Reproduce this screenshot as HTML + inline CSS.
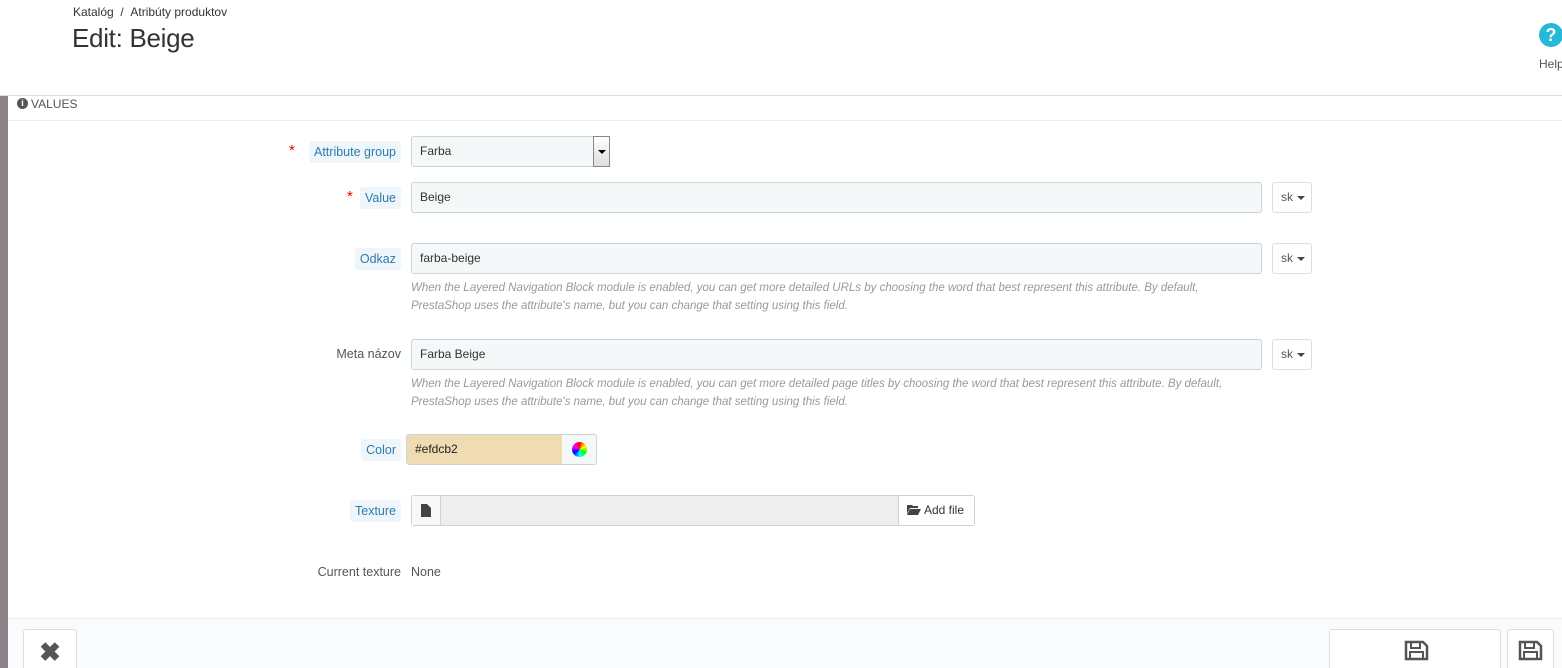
<!DOCTYPE html>
<html><head><meta charset="utf-8"><style>
*{box-sizing:border-box;margin:0;padding:0}
html,body{width:1562px;height:668px;overflow:hidden}
body{background:#fff;font-family:"Liberation Sans",sans-serif;font-size:12px;color:#555;position:relative}
.a{position:absolute}
.lbl{position:absolute;right:1161px;font-size:12.5px;color:#2f7bab;background:#eef6fb;padding:3px 5px;border-radius:3px;height:22px;line-height:16px}
.star{color:#e00;font-size:15px;position:absolute}
.inp{position:absolute;left:411px;width:851px;height:31px;background:#f4f8f9;border:1px solid #c7d6db;border-radius:3px;padding:0 8px;line-height:29px;color:#333}
.sk{position:absolute;left:1272px;width:40px;height:31px;border:1px solid #ddd;border-radius:3px;line-height:29px;padding-left:8px;color:#555;background:#fff}
.sk:after{content:"";position:absolute;left:24px;top:13px;border:4px solid transparent;border-top:4px solid #444}
.help{position:absolute;left:411px;width:850px;font-style:italic;color:#999;font-size:11.5px;line-height:18px}
</style></head><body>
<div class="a" style="left:73px;top:5px;font-size:12px;color:#333">Katalóg &nbsp;/ &nbsp;Atribúty produktov</div>
<div class="a" style="left:72px;top:23px;font-size:26px;color:#333;letter-spacing:-0.3px">Edit: Beige</div>
<div class="a" style="left:1539px;top:23px;width:24px;height:24px;border-radius:50%;background:#25b9d7;color:#fff;font-weight:bold;font-size:18px;text-align:center;line-height:24px">?</div>
<div class="a" style="left:1539px;top:57px;font-size:12px;color:#555">Help</div>
<div class="a" style="left:0;top:95px;width:1562px;height:1px;background:#ddd"></div>
<div class="a" style="left:0;top:96px;width:8px;height:572px;background:#8a8287"></div>
<div class="a" style="left:17px;top:98px;width:11px;height:11px;border-radius:50%;background:#555;color:#fff;font-size:9px;font-weight:bold;text-align:center;line-height:11px">i</div>
<div class="a" style="left:31px;top:97px;font-size:12px;color:#555">VALUES</div>
<div class="a" style="left:8px;top:120px;width:1554px;height:1px;background:#eee"></div>

<span class="star" style="left:289px;top:142px">*</span>
<div class="lbl" style="top:141px">Attribute group</div>
<div class="inp" style="top:136px;width:199px;border-radius:3px 0 0 3px">Farba</div>
<div class="a" style="left:593px;top:136px;width:17px;height:31px;border:1px solid #888;background:linear-gradient(#fff,#ddd)"><div style="position:absolute;left:4px;top:13px;border:4px solid transparent;border-top:4px solid #000"></div></div>

<span class="star" style="left:347px;top:188px">*</span>
<div class="lbl" style="top:187px">Value</div>
<div class="inp" style="top:182px">Beige</div>
<div class="sk" style="top:182px">sk</div>

<div class="lbl" style="top:248px">Odkaz</div>
<div class="inp" style="top:243px">farba-beige</div>
<div class="sk" style="top:243px">sk</div>
<div class="help" style="top:279px">When the Layered Navigation Block module is enabled, you can get more detailed URLs by choosing the word that best represent this attribute. By default, PrestaShop uses the attribute's name, but you can change that setting using this field.</div>

<div class="a" style="right:1161px;top:347px;font-size:12.5px;color:#555">Meta názov</div>
<div class="inp" style="top:339px">Farba Beige</div>
<div class="sk" style="top:339px">sk</div>
<div class="help" style="top:375px">When the Layered Navigation Block module is enabled, you can get more detailed page titles by choosing the word that best represent this attribute. By default, PrestaShop uses the attribute's name, but you can change that setting using this field.</div>

<div class="lbl" style="top:439px">Color</div>
<div class="a" style="left:406px;top:434px;width:191px;height:31px;border:1px solid #c7d6db;border-radius:3px;background:#f4f8f9">
<div style="position:absolute;left:0;top:0;width:155px;height:29px;background:#efdcb2;line-height:29px;padding-left:8px;color:#222">#efdcb2</div>
<div style="position:absolute;left:165px;top:7px;width:15px;height:15px;border-radius:50%;background:conic-gradient(red,yellow,lime,cyan,blue,magenta,red)"></div></div>

<div class="lbl" style="top:500px">Texture</div>
<div class="a" style="left:411px;top:495px;width:564px;height:31px;border:1px solid #c7d6db;border-radius:3px;background:#eee">
<div style="position:absolute;left:0;top:0;width:29px;height:29px;background:#f8f8f8;border-right:1px solid #c7d6db"><svg style="position:absolute;left:9px;top:8px" width="10" height="13" viewBox="0 0 10 13"><path d="M0 0h6l4 4v9H0z" fill="#444"/></svg></div>
<div style="position:absolute;right:0;top:0;width:76px;height:29px;background:#fff;border-left:1px solid #c7d6db;line-height:29px;padding-left:8px;color:#333"><svg width="14" height="10" viewBox="0 0 14 10" style="margin-right:3px;vertical-align:-1px"><path d="M0 0h5l1 1h5v2H3L0 9z M3 4h11l-3 6H0z" fill="#444"/></svg>Add file</div></div>

<div class="a" style="right:1161px;top:565px;font-size:12.5px;color:#555">Current texture</div>
<div class="a" style="left:411px;top:565px;font-size:12.5px;color:#555">None</div>

<div class="a" style="left:8px;top:618px;width:1554px;height:50px;background:#fafbfc;border-top:1px solid #eee"></div>
<div class="a" style="left:23px;top:629px;width:54px;height:45px;border:1px solid #ddd;border-radius:3px;background:#fff;text-align:center;font-size:26px;font-weight:bold;color:#555;line-height:44px">✖</div>
<div class="a" style="left:1329px;top:629px;width:172px;height:45px;border:1px solid #ddd;border-radius:3px;background:#fff">
<svg style="position:absolute;left:74px;top:10px" width="25" height="21" viewBox="0 0 25 21"><path d="M2 2h17l4 4v13H2z" fill="none" stroke="#555" stroke-width="2.5"/><rect x="7" y="2" width="9" height="6" fill="none" stroke="#555" stroke-width="2"/><rect x="6" y="12" width="13" height="7" fill="none" stroke="#555" stroke-width="2"/></svg></div>
<div class="a" style="left:1507px;top:629px;width:47px;height:45px;border:1px solid #ddd;border-radius:3px;background:#fff">
<svg style="position:absolute;left:10px;top:10px" width="25" height="21" viewBox="0 0 25 21"><path d="M2 2h17l4 4v13H2z" fill="none" stroke="#555" stroke-width="2.5"/><rect x="7" y="2" width="9" height="6" fill="none" stroke="#555" stroke-width="2"/><rect x="6" y="12" width="13" height="7" fill="none" stroke="#555" stroke-width="2"/></svg></div>
</body></html>
